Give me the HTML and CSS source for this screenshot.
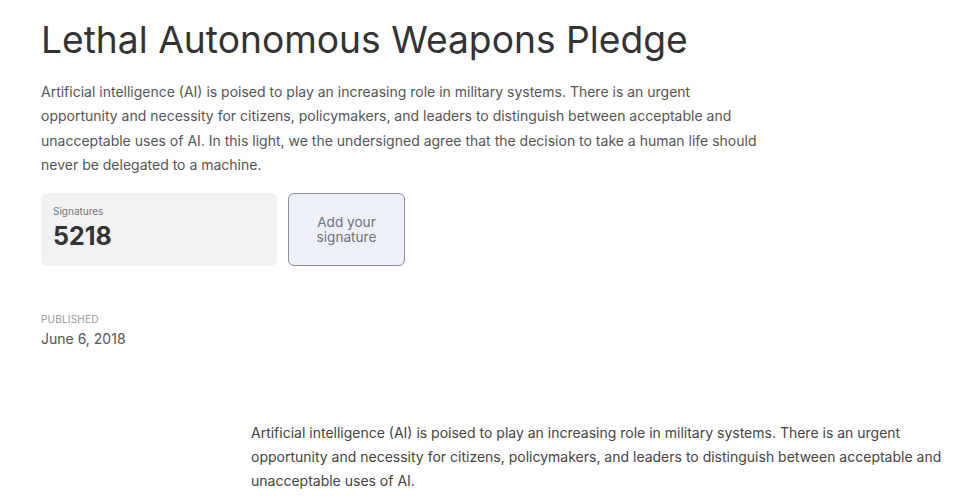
FILE: index.html
```html
<!DOCTYPE html>
<html lang="en">
<head>
<meta charset="utf-8">
<title>Lethal Autonomous Weapons Pledge</title>
<link rel="stylesheet" href="styles.css">
</head>
<body>
<main class="page">
  <header class="hero">
    <h1 class="title">Lethal Autonomous Weapons Pledge</h1>
    <p class="intro">Artificial intelligence (AI) is poised to play an increasing role in military systems. There is an urgent opportunity and necessity for citizens, policymakers, and leaders to distinguish between acceptable and unacceptable uses of AI. In this light, we the undersigned agree that the decision to take a human life should never be delegated to a machine.</p>
    <div class="actions">
      <div class="count-card">
        <span class="count-label">Signatures</span>
        <span class="count-value">5218</span>
      </div>
      <button class="sign-btn" type="button"><span class="sign-line">Add your</span><span class="sign-line">signature</span></button>
    </div>
    <div class="meta">
      <span class="meta-label">PUBLISHED</span>
      <span class="meta-value">June 6, 2018</span>
    </div>
  </header>
  <section class="body">
    <p class="body-text">Artificial intelligence (AI) is poised to play an increasing role in military systems. There is an urgent opportunity and necessity for citizens, policymakers, and leaders to distinguish between acceptable and unacceptable uses of AI.</p>
  </section>
</main>
</body>
</html>
```
FILE: styles.css
```css
* { box-sizing: border-box; }
html, body { margin: 0; padding: 0; background: #fff; }
body {
  font-family: Inter, "Noto Sans", "Liberation Sans", sans-serif;
  color: #444;
}
.page { padding: 18px 0 0 41px; }
.title {
  margin: 0;
  font-size: 37.2px;
  font-weight: 400;
  line-height: 44px;
  color: #333;
}
.intro {
  margin: 18px 0 0;
  width: 720px;
  font-size: 14px;
  line-height: 24.3px;
  color: #555;
}
.actions {
  display: flex;
  gap: 11px;
  margin-top: 16px;
}
.count-card {
  width: 236px;
  height: 73px;
  background: #f2f2f2;
  border-radius: 6px;
  padding: 11px 12px 0;
  display: flex;
  flex-direction: column;
}
.count-label { font-size: 10px; color: #777; line-height: 14px; }
.count-value { font-size: 25px; font-weight: 700; color: #333; line-height: 30px; margin-top: 3px; }
.sign-btn {
  width: 117px;
  height: 73px;
  background: #eef0f8;
  border: 1px solid #8a8e9c;
  border-radius: 6px;
  font-family: inherit;
  font-size: 13.6px;
  color: #6b7080;
  cursor: pointer;
  display: flex;
  flex-direction: column;
  align-items: center;
  justify-content: center;
  padding: 0;
}
.sign-line { display: block; line-height: 15px; }
.meta { margin-top: 46px; display: flex; flex-direction: column; }
.meta-label { font-size: 10px; color: #999; line-height: 14px; letter-spacing: 0.2px; }
.meta-value { font-size: 14px; color: #555; line-height: 20px; margin-top: 3px; }
.body { padding: 72px 0 0 210px; }
.body-text {
  margin: 0;
  width: 700px;
  font-size: 14px;
  line-height: 24px;
  color: #444;
}
```
